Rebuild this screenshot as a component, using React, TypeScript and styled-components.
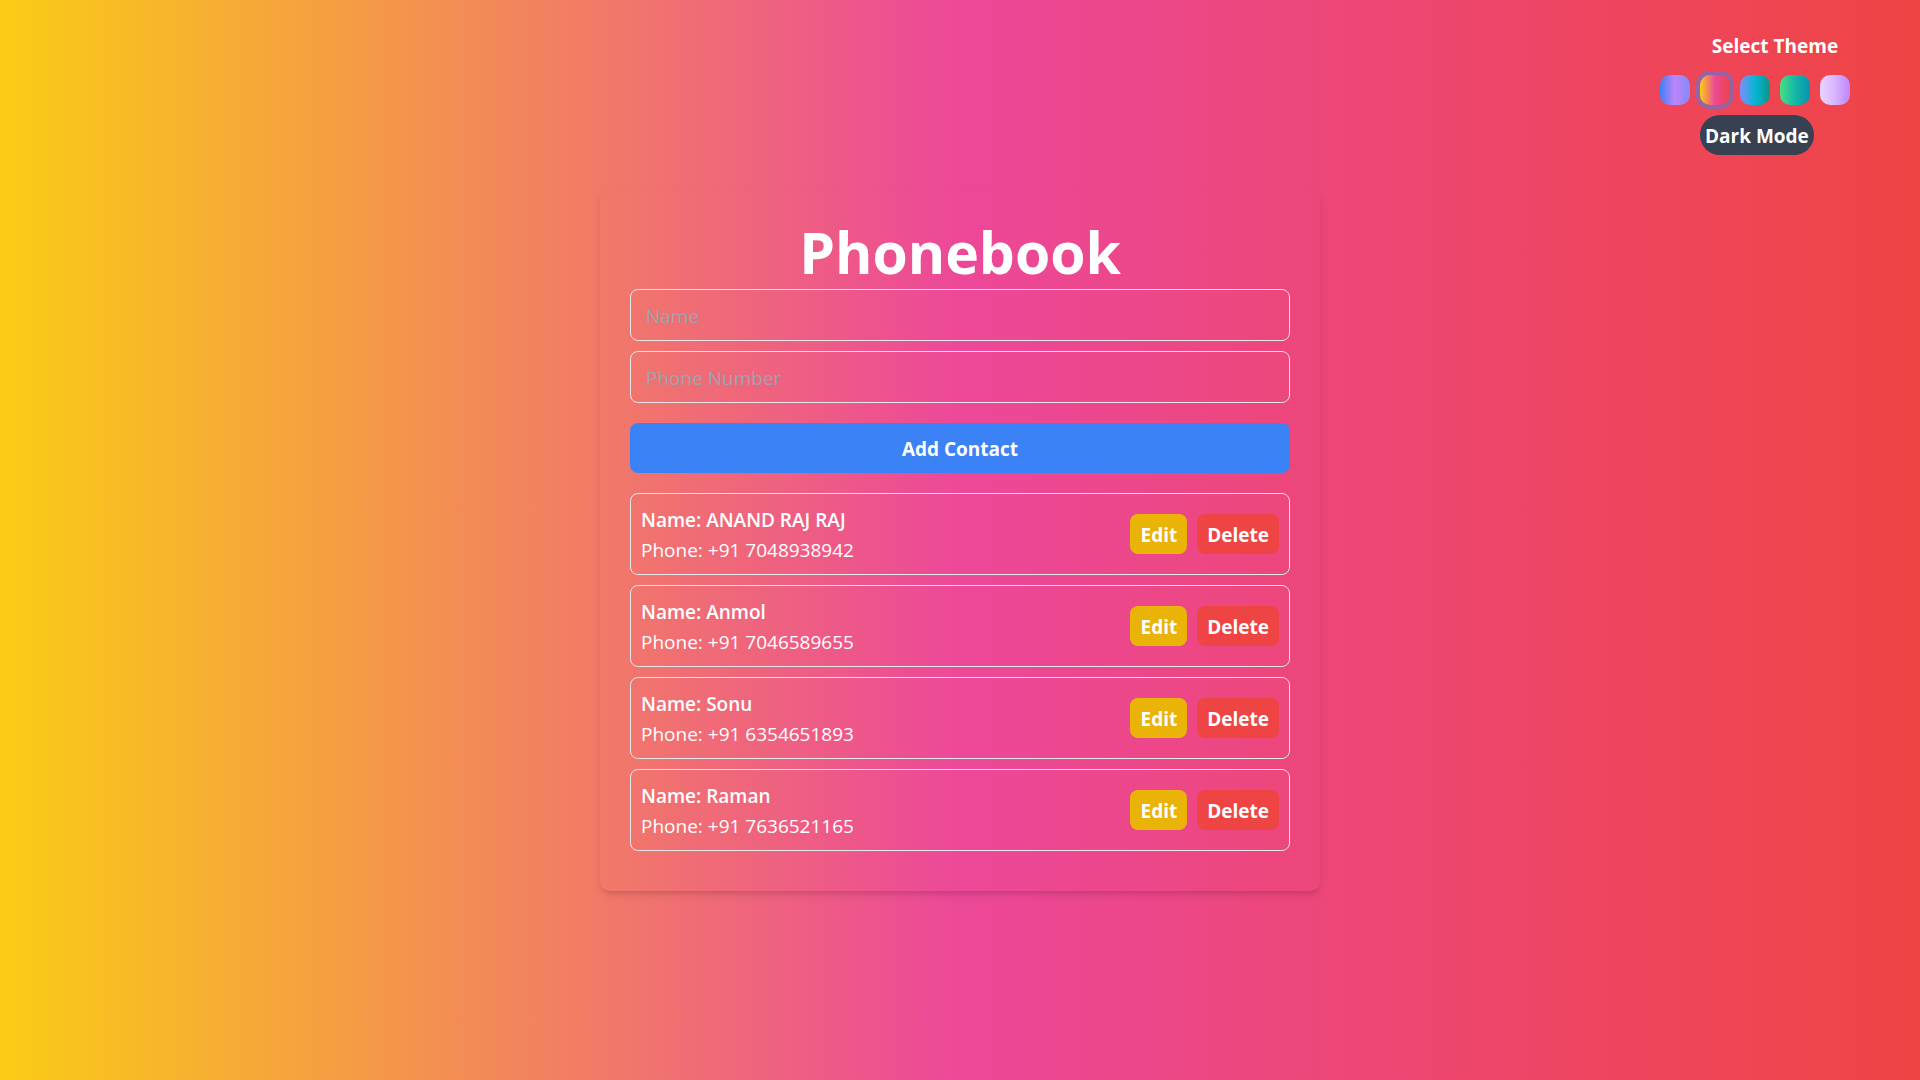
import React, { useState } from "react";
import styled, { createGlobalStyle } from "styled-components";

const GlobalStyle = createGlobalStyle`
  *, *::before, *::after { box-sizing: border-box; }
  body {
    margin: 0;
    font-family: "Segoe UI", "Open Sans", "Noto Sans", sans-serif;
    font-size: 19px;
    line-height: 30px;
  }
  h1, p, ul { margin: 0; padding: 0; }
  button, input { font: inherit; }
`;

const themes = [
  { name: "Violet", gradient: "linear-gradient(to right, #3b82f6, #c084fc, #818cf8)" },
  { name: "Sunset", gradient: "linear-gradient(to right, #facc15, #ec4899, #ef4444)" },
  { name: "Ocean", gradient: "linear-gradient(to right, #818cf8, #06b6d4, #0d9488)" },
  { name: "Forest", gradient: "linear-gradient(to right, #4ade80, #14b8a6, #0891b2)" },
  { name: "Lavender", gradient: "linear-gradient(to right, #e9d5ff, #d8b4fe, #c084fc)" },
];

const Page = styled.div<{ $background: string }>`
  display: grid;
  grid-template: minmax(100vh, auto) / 1fr;
  background: ${(p) => p.$background};
  color: #fff;
`;

const ThemePanel = styled.section`
  grid-area: 1 / 1;
  place-self: start end;
  z-index: 1;
  display: flex;
  flex-direction: column;
  align-items: center;
  padding: 30px 70px 0 0;
`;

const ThemeTitle = styled.p`
  font-weight: 700;
  line-height: 32px;
  padding-left: 40px;
`;

const Swatches = styled.div`
  display: flex;
  gap: 10px;
  margin: 13px 0 10px;
`;

const Swatch = styled.button<{ $gradient: string; $active: boolean }>`
  width: 30px;
  height: 30px;
  padding: 0;
  border: 0;
  border-radius: 10px;
  cursor: pointer;
  background: ${(p) => p.$gradient};
  box-shadow: ${(p) => (p.$active ? "0 0 0 4px rgba(59, 130, 246, 0.5)" : "none")};
`;

const Button = styled.button`
  height: 40px;
  padding: 2px 10px 0;
  border: 0;
  border-radius: 8px;
  color: #fff;
  font-weight: 700;
  cursor: pointer;
`;

const ModeButton = styled(Button)`
  align-self: flex-start;
  margin-left: 40px;
  padding: 2px 5px 0;
  border-radius: 20px;
  background: #374151;
`;

const Card = styled.main`
  grid-area: 1 / 1;
  place-self: center;
  width: 100%;
  max-width: 720px;
  padding: 30px;
  border-radius: 10px;
  box-shadow: 0 5px 8px -1px rgba(0, 0, 0, 0.1), 0 3px 5px -2px rgba(0, 0, 0, 0.1);
`;

const Title = styled.h1`
  margin-bottom: 4px;
  font-size: 57px;
  font-weight: 700;
  line-height: 66px;
  text-align: center;
`;

const Form = styled.form`
  display: flex;
  flex-direction: column;
  gap: 10px;
  margin-bottom: 20px;
`;

const Field = styled.input`
  width: 100%;
  height: 52px;
  padding: 2px 15px 0;
  border: 1px solid #e5e7eb;
  border-radius: 8px;
  background: transparent;
  color: #fff;
  &::placeholder { color: #9ca3af; opacity: 1; }
`;

const AddButton = styled(Button)`
  height: 50px;
  margin-top: 10px;
  background: #3b82f6;
`;

const ContactList = styled.ul`
  display: flex;
  flex-direction: column;
  gap: 10px;
  margin-bottom: 10px;
  list-style: none;
`;

const ContactRow = styled.li`
  display: flex;
  align-items: center;
  justify-content: space-between;
  padding: 9px 10px;
  border: 1px solid #e5e7eb;
  border-radius: 8px;
`;

const ContactInfo = styled.div`
  padding-top: 2px;
`;

const ContactName = styled.p`
  font-weight: 600;
`;

const Actions = styled.div`
  display: flex;
  gap: 10px;
`;

const ActionButton = styled(Button)<{ $color: string }>`
  background: ${(p) => p.$color};
`;

const initialContacts = [
  { name: "ANAND RAJ RAJ", phone: "+91 7048938942" },
  { name: "Anmol", phone: "+91 7046589655" },
  { name: "Sonu", phone: "+91 6354651893" },
  { name: "Raman", phone: "+91 7636521165" },
];

export default function App() {
  const [themeIndex, setThemeIndex] = useState(1);
  const [dark, setDark] = useState(false);
  const [contacts, setContacts] = useState(initialContacts);
  const [name, setName] = useState("");
  const [phone, setPhone] = useState("");

  const removeAt = (index: number) => setContacts(contacts.filter((_, i) => i !== index));

  const addContact = (event: React.FormEvent) => {
    event.preventDefault();
    if (!name || !phone) return;
    setContacts([...contacts, { name, phone }]);
    setName("");
    setPhone("");
  };

  const editAt = (index: number) => {
    setName(contacts[index].name);
    setPhone(contacts[index].phone);
    removeAt(index);
  };

  return (
    <Page $background={dark ? "#111827" : themes[themeIndex].gradient}>
      <GlobalStyle />
      <ThemePanel>
        <ThemeTitle>Select Theme</ThemeTitle>
        <Swatches>
          {themes.map((theme, i) => (
            <Swatch
              key={theme.name}
              type="button"
              aria-label={theme.name}
              aria-pressed={i === themeIndex}
              $gradient={theme.gradient}
              $active={i === themeIndex}
              onClick={() => setThemeIndex(i)}
            />
          ))}
        </Swatches>
        <ModeButton type="button" onClick={() => setDark(!dark)}>
          {dark ? "Light Mode" : "Dark Mode"}
        </ModeButton>
      </ThemePanel>
      <Card>
        <Title>Phonebook</Title>
        <Form onSubmit={addContact}>
          <Field
            type="text"
            aria-label="Name"
            placeholder="Name"
            value={name}
            onChange={(e) => setName(e.target.value)}
          />
          <Field
            type="tel"
            aria-label="Phone Number"
            placeholder="Phone Number"
            value={phone}
            onChange={(e) => setPhone(e.target.value)}
          />
          <AddButton type="submit">Add Contact</AddButton>
        </Form>
        <ContactList>
          {contacts.map((contact, i) => (
            <ContactRow key={contact.phone}>
              <ContactInfo>
                <ContactName>Name: {contact.name}</ContactName>
                <p>Phone: {contact.phone}</p>
              </ContactInfo>
              <Actions>
                <ActionButton type="button" $color="#eab308" onClick={() => editAt(i)}>
                  Edit
                </ActionButton>
                <ActionButton type="button" $color="#ef4444" onClick={() => removeAt(i)}>
                  Delete
                </ActionButton>
              </Actions>
            </ContactRow>
          ))}
        </ContactList>
      </Card>
    </Page>
  );
}
